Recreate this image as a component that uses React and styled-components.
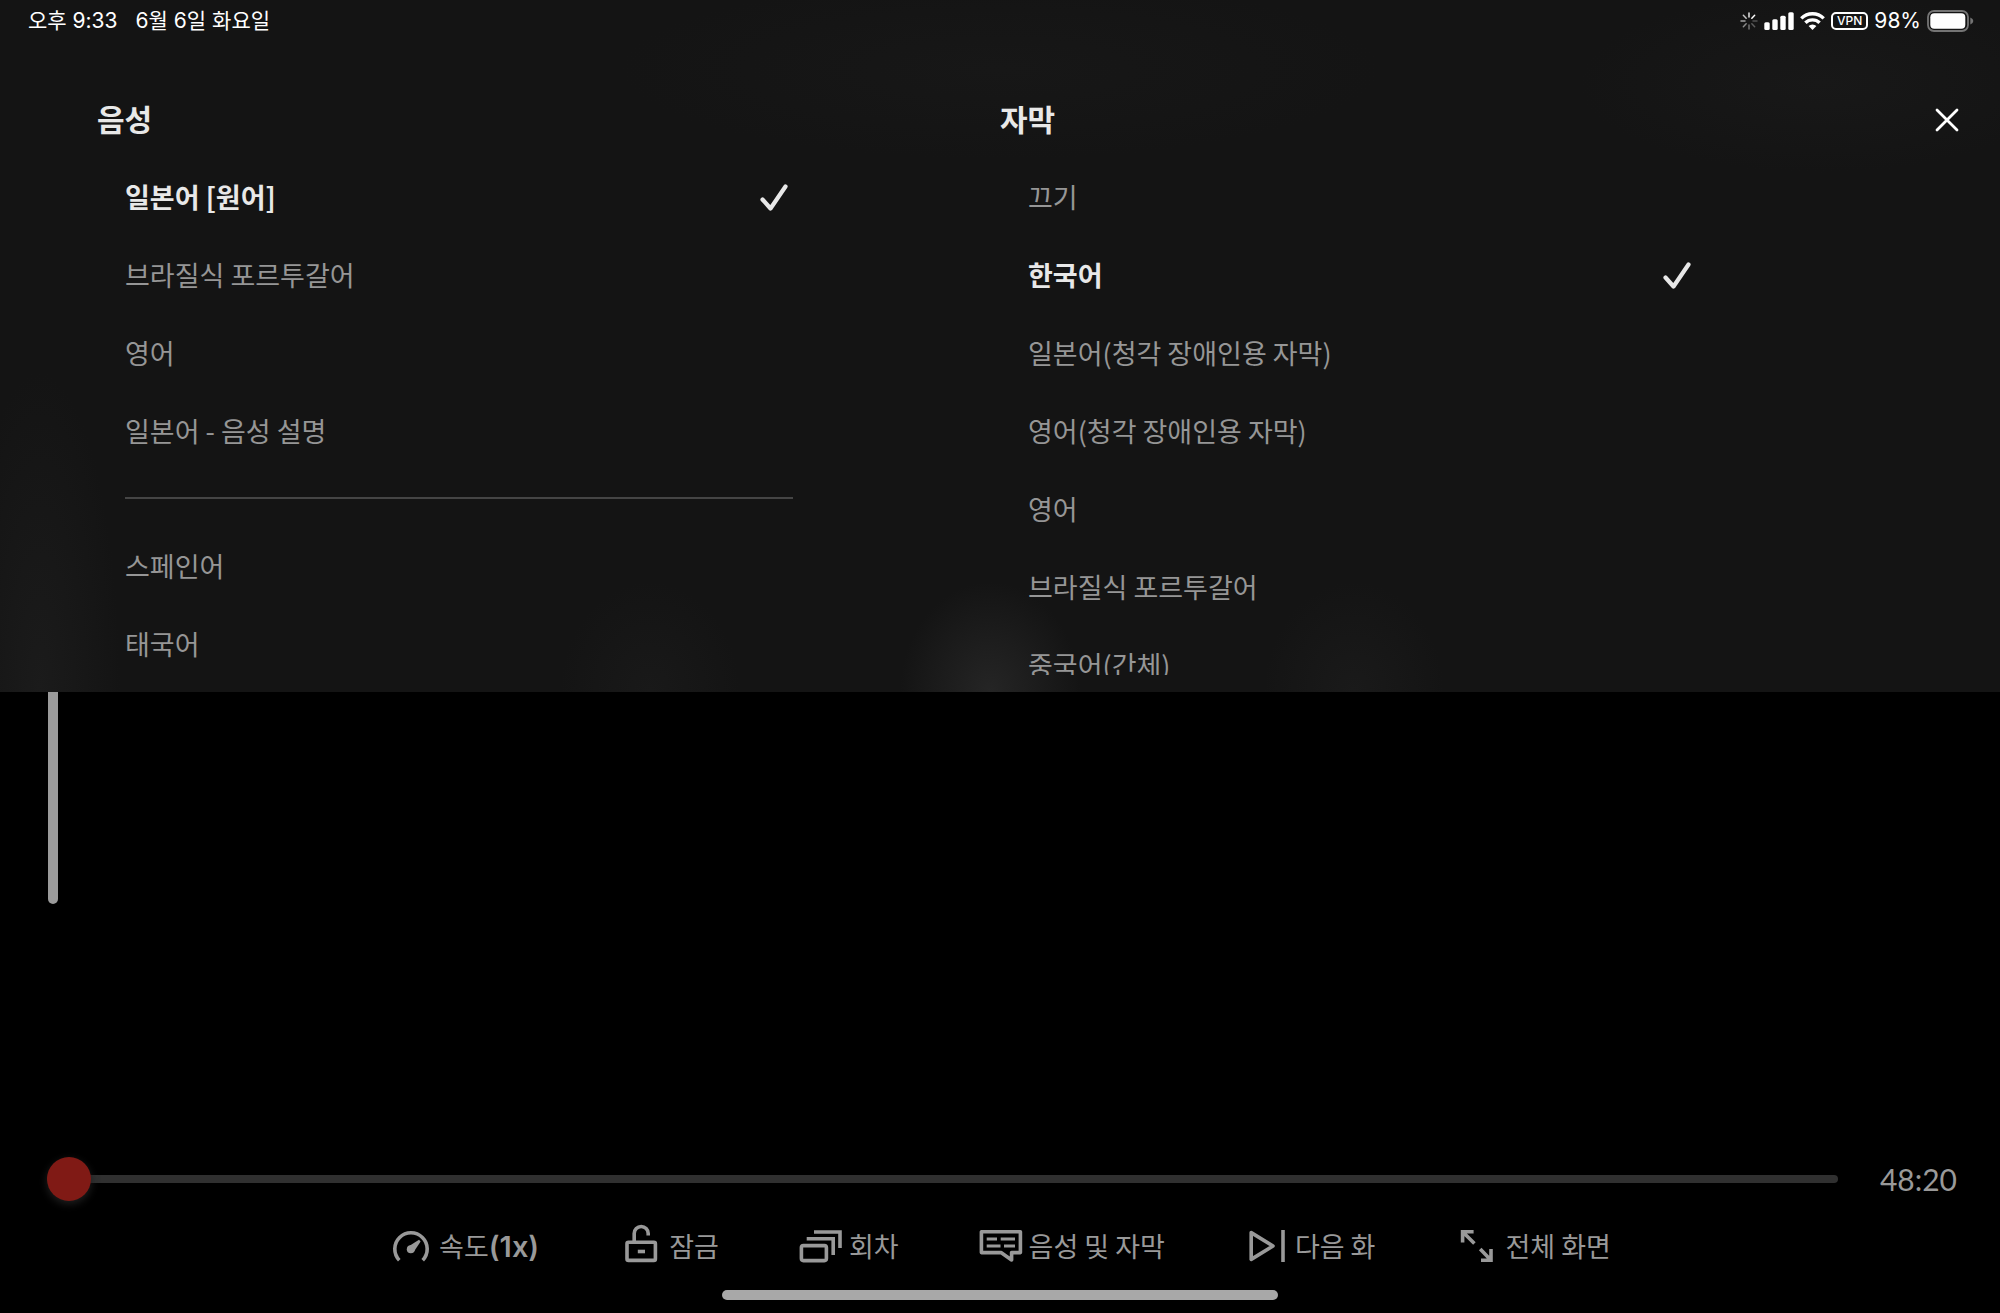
import React, { useState } from 'react';
import styled, { createGlobalStyle } from 'styled-components';

const GlobalStyle = createGlobalStyle`
  * {
    box-sizing: border-box;
  }
  body {
    margin: 0;
    background: #000;
    color: #999;
    font-family: 'Noto Sans CJK KR', sans-serif;
  }
  button {
    padding: 0;
    border: 0;
    background: none;
    color: inherit;
    font: inherit;
    cursor: pointer;
  }
`;

const Page = styled.div`
  display: flex;
  flex-direction: column;
  min-height: 100vh;
`;

/* the faint glows are the player controls behind the blurred panel */
const Panel = styled.section`
  background:
    radial-gradient(90px 110px at 49.5% 100%, #252525, transparent),
    radial-gradient(90px 110px at 32.5% 100%, #191919, transparent),
    radial-gradient(90px 110px at 67.7% 100%, #1a1a1a, transparent),
    radial-gradient(80px 320px at 2% 100%, #1b1b1b, transparent),
    radial-gradient(380px 90px at 50% 10%, #171717, transparent),
    radial-gradient(240px 90px at 91% 12%, #181818, transparent),
    #141414;
`;

const StatusBar = styled.header`
  display: flex;
  justify-content: space-between;
  align-items: center;
  height: 42px;
  padding: 0 26px 0 28px;
  color: #fff;
  font-family: Inter, 'Noto Sans CJK KR', sans-serif;
  font-size: 21px;
  line-height: 24px;
`;

const StatusGroup = styled.div`
  display: flex;
  align-items: center;
  gap: ${props => props.$gap}px;
`;

const Vpn = styled.span`
  padding: 0 4px;
  border: 2px solid #fff;
  border-radius: 5px;
  font-size: 12px;
  font-weight: 500;
  line-height: 14px;
`;

const PanelBody = styled.div`
  display: flex;
  align-items: flex-start;
  padding: 56px 31px 17px 97px;
`;

const Tracks = styled.div`
  display: grid;
  grid-template-columns: 1fr 1fr;
  flex: 1;
  padding-right: 22px;
`;

const Track = styled.fieldset`
  min-width: 0;
  margin: 0;
  padding: 0;
  border: 0;
`;

const Heading = styled.legend`
  padding: 0;
  color: #e8e8e8;
  font-size: 30px;
  font-weight: 700;
  line-height: 40px;
`;

const Options = styled.div`
  width: 74%;
  height: 517px;
  margin: 20px 0 0 28px;
  overflow: hidden;
`;

const Option = styled.label`
  display: flex;
  justify-content: space-between;
  align-items: center;
  height: 78px;
  padding-right: 5px;
  color: ${props => (props.$active ? '#e8e8e8' : '#969696')};
  font-size: 27px;
  font-weight: ${props => (props.$active ? 700 : 400)};
  line-height: 40px;
  cursor: pointer;
`;

const Radio = styled.input`
  appearance: none;
  width: 0;
  margin: 0;
  outline: none;
`;

const OptionText = styled.span`
  flex: 1;
`;

const Divider = styled.hr`
  height: 2px;
  margin: 27px 0 28px;
  border: 0;
  background: #454545;
`;

const CloseButton = styled.button`
  display: flex;
  justify-content: center;
  align-items: center;
  width: 44px;
  height: 44px;
`;

const Stage = styled.main`
  flex: 1;
  padding-left: 48px;
`;

const Brightness = styled.div`
  width: 10px;
  height: 212px;
  border-radius: 0 0 5px 5px;
  background: #9b9b9b;
`;

const Footer = styled.footer`
  padding-bottom: 13px;
`;

const Timeline = styled.div`
  display: flex;
  align-items: center;
  gap: 42px;
  padding: 0 43px 0 47px;
`;

const Seek = styled.input`
  appearance: none;
  flex: 1;
  height: 44px;
  margin: 0;
  background: none;

  &::-webkit-slider-runnable-track {
    height: 8px;
    border-radius: 4px;
    background: #303030;
  }
  &::-webkit-slider-thumb {
    appearance: none;
    width: 44px;
    height: 44px;
    margin-top: -18px;
    border-radius: 50%;
    background: #801a15;
    box-shadow: 0 3px 8px #202020;
  }
`;

const Remaining = styled.span`
  color: #999;
  font-family: Lato, sans-serif;
  font-size: 30px;
  line-height: 36px;
`;

const Controls = styled.nav`
  display: flex;
  justify-content: center;
  gap: 80px;
  margin-top: 23px;
`;

const Control = styled.button`
  display: flex;
  align-items: center;
  gap: 6px;
  height: 44px;
  font-size: 27px;
  line-height: 40px;
`;

const Rate = styled.span`
  font-family: Inter, sans-serif;
  font-size: 29px;
  font-weight: 600;
`;

const HomeIndicator = styled.div`
  width: 556px;
  max-width: 60%;
  height: 10px;
  margin: 22px auto 0;
  border-radius: 5px;
  background: #a8a8a8;
`;

const ControlIcon = ({ children }) => (
  <svg width="44" height="44" viewBox="0 0 44 44" fill="none" stroke="currentColor" strokeWidth="3.6" aria-hidden="true">
    {children}
  </svg>
);

const Check = () => (
  <svg width="28" height="28" viewBox="0 0 28 28" fill="none" stroke="currentColor" strokeWidth="4.2" strokeLinecap="round" strokeLinejoin="round" aria-hidden="true">
    <path d="M2.5 16.5 L10.5 25.5 L25.5 3.5" />
  </svg>
);

const Spinner = () => (
  <svg width="18" height="18" viewBox="0 0 18 18" stroke="#fff" strokeWidth="1.5" strokeLinecap="round" aria-hidden="true">
    {[0.9, 1, 0.25, 0.3, 0.4, 0.5, 0.6, 0.75].map((opacity, i) => (
      <path key={i} d="M9 1 V5" opacity={opacity} transform={`rotate(${i * 45} 9 9)`} />
    ))}
  </svg>
);

const Signal = () => (
  <svg width="30" height="18" viewBox="0 0 30 18" fill="#fff" aria-hidden="true">
    <rect x="0.3" y="10.3" width="5.4" height="7.7" rx="1.5" />
    <rect x="8.3" y="7.3" width="5.4" height="10.7" rx="1.5" />
    <rect x="16.3" y="3.7" width="5.4" height="14.3" rx="1.5" />
    <rect x="24.3" y="0.3" width="5.4" height="17.7" rx="1.5" />
  </svg>
);

const Wifi = () => (
  <svg width="25" height="18" viewBox="0 0 25 18" fill="none" stroke="#fff" strokeWidth="3.4" aria-hidden="true">
    <path d="M1.3 6.4 A15.8 15.8 0 0 1 23.7 6.4" />
    <path d="M5.4 10.8 A10 10 0 0 1 19.6 10.8" />
    <path d="M12.5 18 L8.6 14 A5.6 5.6 0 0 1 16.4 14 Z" fill="#fff" stroke="none" />
  </svg>
);

const Battery = () => (
  <svg width="47" height="22" viewBox="0 0 47 22" aria-hidden="true">
    <rect x="1" y="1" width="40" height="20" rx="6" fill="none" stroke="#747474" strokeWidth="1.8" />
    <rect x="3.3" y="3.3" width="35" height="15.4" rx="4" fill="#fff" />
    <path d="M43.3 7.5 Q46.3 8.6 46.3 11 Q46.3 13.4 43.3 14.5 Z" fill="#747474" />
  </svg>
);

const audioOptions = [
  '일본어 [원어]',
  '브라질식 포르투갈어',
  '영어',
  '일본어 - 음성 설명',
  null,
  '스페인어',
  '태국어',
];

const subtitleOptions = [
  '끄기',
  '한국어',
  '일본어(청각 장애인용 자막)',
  '영어(청각 장애인용 자막)',
  '영어',
  '브라질식 포르투갈어',
  '중국어(간체)',
];

const TrackList = ({ title, name, options, initial }) => {
  const [selected, setSelected] = useState(initial);

  return (
    <Track>
      <Heading>{title}</Heading>
      <Options>
        {options.map(option =>
          option === null ? (
            <Divider key="divider" />
          ) : (
            <Option key={option} $active={option === selected}>
              <Radio
                type="radio"
                name={name}
                checked={option === selected}
                onChange={() => setSelected(option)}
              />
              <OptionText>{option}</OptionText>
              {option === selected && <Check />}
            </Option>
          )
        )}
      </Options>
    </Track>
  );
};

const App = () => {
  const [position, setPosition] = useState(0);

  return (
    <Page>
      <GlobalStyle />
      <Panel>
        <StatusBar>
          <StatusGroup $gap={18}>
            <span>오후 9:33</span>
            <span>6월 6일 화요일</span>
          </StatusGroup>
          <StatusGroup $gap={6}>
            <Spinner />
            <Signal />
            <Wifi />
            <Vpn>VPN</Vpn>
            <span>98%</span>
            <Battery />
          </StatusGroup>
        </StatusBar>
        <PanelBody>
          <Tracks>
            <TrackList title="음성" name="audio" options={audioOptions} initial="일본어 [원어]" />
            <TrackList title="자막" name="subtitle" options={subtitleOptions} initial="한국어" />
          </Tracks>
          <CloseButton aria-label="닫기">
            <svg width="24" height="24" viewBox="0 0 24 24" stroke="#fff" strokeWidth="2.8" strokeLinecap="round">
              <path d="M2 2 L22 22 M22 2 L2 22" />
            </svg>
          </CloseButton>
        </PanelBody>
      </Panel>

      <Stage>
        <Brightness />
      </Stage>

      <Footer>
        <Timeline>
          <Seek
            type="range"
            aria-label="재생 위치"
            min="0"
            max="2900"
            value={position}
            onChange={e => setPosition(Number(e.target.value))}
          />
          <Remaining>48:20</Remaining>
        </Timeline>
        <Controls>
          <Control>
            <ControlIcon>
              <path d="M10.3 36.2 A16.2 16.2 0 1 1 33.7 36.2" />
              <path d="M19.4 22.4 L30 15.8 L31.6 17.4 L25 27.4 Z" fill="currentColor" stroke="none" />
              <circle cx="21.8" cy="25.2" r="4" fill="currentColor" stroke="none" />
            </ControlIcon>
            <span>속도<Rate>(1x)</Rate></span>
          </Control>
          <Control>
            <ControlIcon>
              <rect x="8" y="18.2" width="28.4" height="18.2" rx="1.5" />
              <path d="M15.2 18 V9.5 A7 7 0 0 1 29.2 9.5 V11.5" />
              <path d="M18.8 27.5 H26" />
            </ControlIcon>
            <span>잠금</span>
          </Control>
          <Control>
            <ControlIcon>
              <rect x="2.4" y="21.6" width="25" height="15" rx="2" />
              <path d="M7.7 14.8 H34.2 V31" />
              <path d="M15 8 H41 V24" />
            </ControlIcon>
            <span>회차</span>
          </Control>
          <Control>
            <ControlIcon>
              <path d="M2.4 7.8 H41.4 V28.6 H32.6 V36 L22 28.6 H2.4 Z" strokeLinejoin="round" />
              <path d="M7.7 15 H18 M21.7 15 H36 M7.7 22 H21.5 M25 22 H36" strokeWidth="3" />
            </ControlIcon>
            <span>음성 및 자막</span>
          </Control>
          <Control>
            <ControlIcon>
              <path d="M6.2 8.6 L28 22 L6.2 35.4 Z" strokeLinejoin="round" />
              <path d="M38 6 V38" />
            </ControlIcon>
            <span>다음 화</span>
          </Control>
          <Control>
            <ControlIcon>
              <path d="M7.6 18.6 V7.8 H18.6 M7.6 7.8 L19.4 19.6" />
              <path d="M25.2 25 L36 36.2 M36 25 V36.2 H26" />
            </ControlIcon>
            <span>전체 화면</span>
          </Control>
        </Controls>
        <HomeIndicator />
      </Footer>
    </Page>
  );
};

export default App;
